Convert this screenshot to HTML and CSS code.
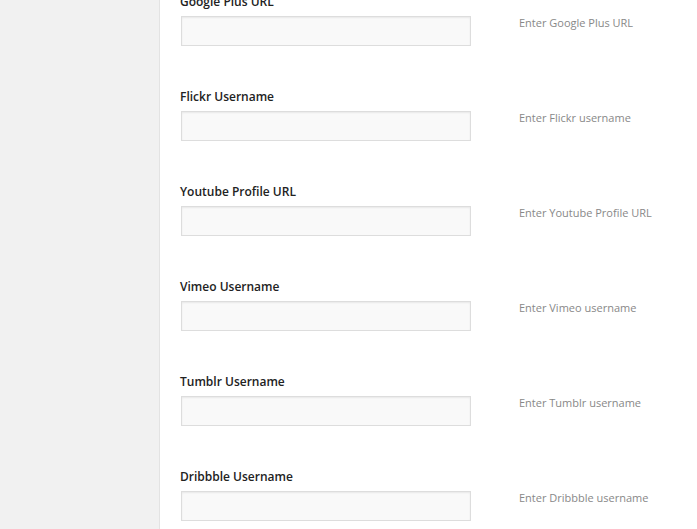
FILE: index.html
```html
<!DOCTYPE html>
<html>
<head>
<meta charset="utf-8">
<link rel="stylesheet" href="styles.css">
</head>
<body>
<div class="layout">
  <aside class="sidebar"></aside>
  <main class="main">
    <div class="field">
      <label class="label">Google Plus URL</label>
      <div class="row"><input class="input" type="text"><span class="desc">Enter Google Plus URL</span></div>
    </div>
    <div class="field">
      <label class="label">Flickr Username</label>
      <div class="row"><input class="input" type="text"><span class="desc">Enter Flickr username</span></div>
    </div>
    <div class="field">
      <label class="label">Youtube Profile URL</label>
      <div class="row"><input class="input" type="text"><span class="desc">Enter Youtube Profile URL</span></div>
    </div>
    <div class="field">
      <label class="label">Vimeo Username</label>
      <div class="row"><input class="input" type="text"><span class="desc">Enter Vimeo username</span></div>
    </div>
    <div class="field">
      <label class="label">Tumblr Username</label>
      <div class="row"><input class="input" type="text"><span class="desc">Enter Tumblr username</span></div>
    </div>
    <div class="field">
      <label class="label">Dribbble Username</label>
      <div class="row"><input class="input" type="text"><span class="desc">Enter Dribbble username</span></div>
    </div>
  </main>
</div>
</body>
</html>
```
FILE: styles.css
```css
html, body {
  margin: 0;
  padding: 0;
  background: #fff;
  height: 100%;
  overflow: hidden;
}
body {
  font-family: "Open Sans", "Liberation Sans", sans-serif;
}
.layout {
  display: flex;
  min-height: 100%;
}
.sidebar {
  width: 159px;
  flex: none;
  background: #f1f1f1;
  border-right: 1px solid #e3e3e3;
}
.main {
  padding-left: 20px;
  margin-top: -7px;
  display: flex;
  flex-direction: column;
  gap: 42px;
}
.field {
  display: flex;
  flex-direction: column;
}
.label {
  display: block;
  font-size: 12px;
  font-weight: 600;
  line-height: 18px;
  color: #222;
  margin-bottom: 5px;
}
.row {
  display: flex;
  align-items: flex-start;
}
.input {
  box-sizing: border-box;
  width: 290px;
  height: 30px;
  margin: 0 0 0 1px;
  padding: 3px 5px;
  border: 1px solid #dddddd;
  background: #f9f9f9;
  box-shadow: inset 0 1px 2px rgba(0,0,0,0.07);
  font-family: inherit;
  font-size: 12px;
  outline: none;
}
.desc {
  margin-left: 48px;
  margin-top: -1px;
  font-size: 11px;
  line-height: 16px;
  color: #888;
}
```
